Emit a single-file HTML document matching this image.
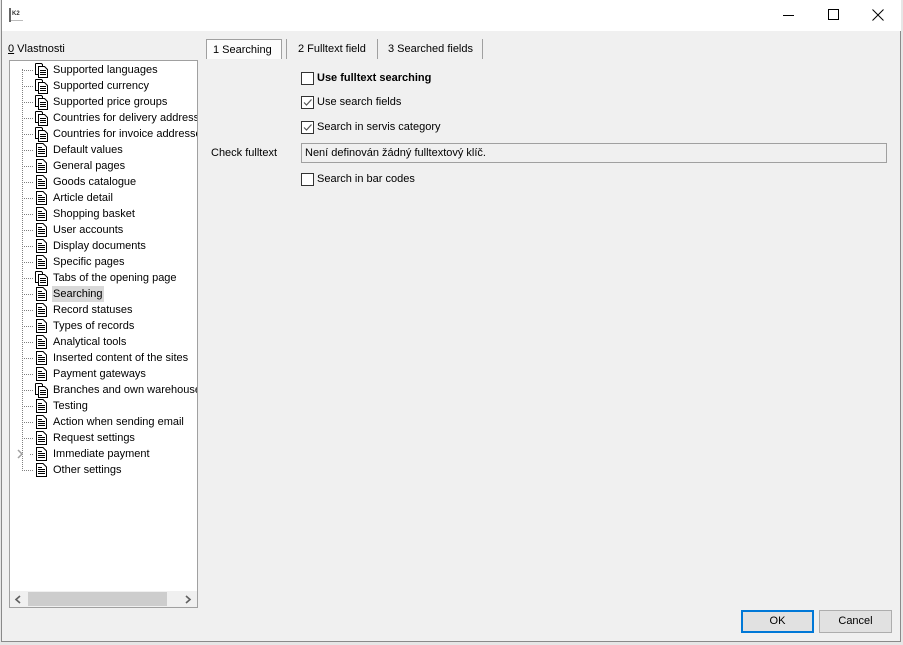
<!DOCTYPE html>
<html><head><meta charset="utf-8">
<style>
*{margin:0;padding:0;box-sizing:border-box}
body{width:903px;height:645px;background:#e6e6e6;position:relative;overflow:hidden;font-family:"Liberation Sans",sans-serif;font-size:11px;color:#000}
.win{position:absolute;left:1px;top:0;width:900px;height:642px;background:#f0f0f0;border:1px solid #8a8a8a;border-top:none}
.title{position:absolute;left:0;top:0;width:899px;height:31px;background:#fff}
.a{position:absolute;white-space:nowrap}
.tree{position:absolute;left:7px;top:60px;width:189px;height:548px;background:#fff;border:1px solid #a0a0a0;overflow:hidden}
.item{position:absolute;left:42px;height:16px;line-height:16px;font-size:11px;color:#000;padding:0 1px;white-space:nowrap}
.sel{background:#d9d9d9}
.hd{position:absolute;left:12px;width:11px;border-top:1px dotted #808080}
.cb{position:absolute;width:13px;height:13px;border:1px solid #333;background:#fff}
.tab{position:absolute;top:39px;height:20px;line-height:20px;font-size:11px;white-space:nowrap}
.btn{position:absolute;top:610px;height:23px;border:1px solid #adadad;background:#e1e1e1;text-align:center;line-height:21px;font-size:11px}
</style></head><body>
<div class="win">
<div class="title">
 <div class="a" style="left:7px;top:8px;width:2px;height:14px;background:#666"></div>
 <div class="a" style="left:10px;top:11px;font-size:6px;font-weight:bold;color:#333">K2</div>
 <div class="a" style="left:9px;top:20px;width:12px;height:1px;background:#bbb"></div>
 <div class="a" style="left:781px;top:15px;width:11px;height:1px;background:#000"></div>
 <div class="a" style="left:826px;top:9px;width:11px;height:11px;border:1px solid #000"></div>
 <svg class="a" style="left:870px;top:9px" width="12" height="12"><path d="M0.5 0.5L11.5 11.5M11.5 0.5L0.5 11.5" stroke="#000" stroke-width="1"/></svg>
</div>
<div class="a" style="left:6px;top:43px;font-size:11px"><u>0</u> Vlastnosti</div>
<div class="tree">
 <div class="a" style="left:12px;top:8px;width:0;height:402px;border-left:1px dotted #808080"></div>
 <div id="items"></div>
 <div class="a" style="left:0;top:530px;width:187px;height:16px;background:#f0f0f0"></div>
 <div class="a" style="left:18px;top:531px;width:139px;height:14px;background:#cdcdcd"></div>
 <svg class="a" style="left:4px;top:534px" width="8" height="9"><path d="M6 1L2 4.5L6 8" stroke="#606060" stroke-width="1.6" fill="none"/></svg>
 <svg class="a" style="left:174px;top:534px" width="8" height="9"><path d="M2 1L6 4.5L2 8" stroke="#606060" stroke-width="1.6" fill="none"/></svg>
</div>
<div class="tab" style="left:204px;width:76px;height:20px;background:#fcfcfc;border:1px solid #a0a0a0;border-bottom:none;padding-left:6px;top:39px">1 Searching</div>
<div class="a" style="left:284px;top:39px;width:1px;height:20px;background:#a0a0a0"></div>
<div class="tab" style="left:296px">2 Fulltext field</div>
<div class="a" style="left:375px;top:39px;width:1px;height:20px;background:#a0a0a0"></div>
<div class="tab" style="left:386px">3 Searched fields</div>
<div class="a" style="left:480px;top:39px;width:1px;height:20px;background:#a0a0a0"></div>

<div class="cb" style="left:299px;top:72px"></div>
<div class="a" style="left:315px;top:72px;font-weight:bold;font-size:11px">Use fulltext searching</div>
<div class="cb" style="left:299px;top:96px"><svg width="11" height="11" style="position:absolute;left:0;top:0"><path d="M2 5.5L4.5 8L9.5 2.5" stroke="#555" stroke-width="1.2" fill="none"/></svg></div>
<div class="a" style="left:315px;top:96px">Use search fields</div>
<div class="cb" style="left:299px;top:121px"><svg width="11" height="11" style="position:absolute;left:0;top:0"><path d="M2 5.5L4.5 8L9.5 2.5" stroke="#555" stroke-width="1.2" fill="none"/></svg></div>
<div class="a" style="left:315px;top:121px">Search in servis category</div>
<div class="a" style="left:209px;top:147px">Check fulltext</div>
<div class="a" style="left:299px;top:143px;width:586px;height:20px;border:1px solid #a0a0a0;background:#f0f0f0;padding:2px 3px;line-height:14px">Není definován žádný fulltextový klíč.</div>
<div class="cb" style="left:299px;top:173px"></div>
<div class="a" style="left:315px;top:173px">Search in bar codes</div>

<div class="btn" style="left:739px;width:73px;border:2px solid #0078d7;line-height:19px">OK</div>
<div class="btn" style="left:817px;width:73px">Cancel</div>
</div>
<script>
var items=[["Supported languages",1],["Supported currency",1],["Supported price groups",1],["Countries for delivery address",1],["Countries for invoice addresses",1],["Default values",0],["General pages",0],["Goods catalogue",0],["Article detail",0],["Shopping basket",0],["User accounts",0],["Display documents",0],["Specific pages",0],["Tabs of the opening page",1],["Searching",0],["Record statuses",0],["Types of records",0],["Analytical tools",0],["Inserted content of the sites",0],["Payment gateways",0],["Branches and own warehouses",1],["Testing",0],["Action when sending email",0],["Request settings",0],["Immediate payment",0],["Other settings",0]];
var h="";
items.forEach(function(it,i){
 var cy=9+i*16;
 h+='<div class="hd" style="top:'+cy+'px;'+(i==24?'left:20px;width:3px':'')+'"></div>';
 var ix=25,iy=cy-7;
 if(it[1]){
  h+='<svg class="a" style="left:'+ix+'px;top:'+iy+'px" width="13" height="15"><path d="M0.5 0.5H6.5L7.5 1.5V3M0.5 0.5V11.5H3" stroke="#000" fill="none"/><path d="M3.5 3.5H9.5L12.5 6.5V14.5H3.5Z" stroke="#000" fill="#fff"/><path d="M5 7.5H11M5 9.5H11M5 11.5H11" stroke="#000"/></svg>';
 }else{
  h+='<svg class="a" style="left:'+(ix+1)+'px;top:'+iy+'px" width="11" height="14"><path d="M0.5 0.5H7L10.5 4V13.5H0.5Z" stroke="#000" fill="#fff"/><path d="M2 4.5H6M2 6.5H9M2 8.5H9M2 10.5H9" stroke="#000"/></svg>';
 }
 h+='<div class="item'+(i==14?' sel':'')+'" style="top:'+(cy-8)+'px">'+it[0]+'</div>';
});
h+='<svg class="a" style="left:7px;top:388px" width="7" height="10"><path d="M1 1L5 5L1 9" stroke="#a0a0a0" stroke-width="1.5" fill="none"/></svg>';
document.getElementById("items").innerHTML=h;
</script>
</body></html>
